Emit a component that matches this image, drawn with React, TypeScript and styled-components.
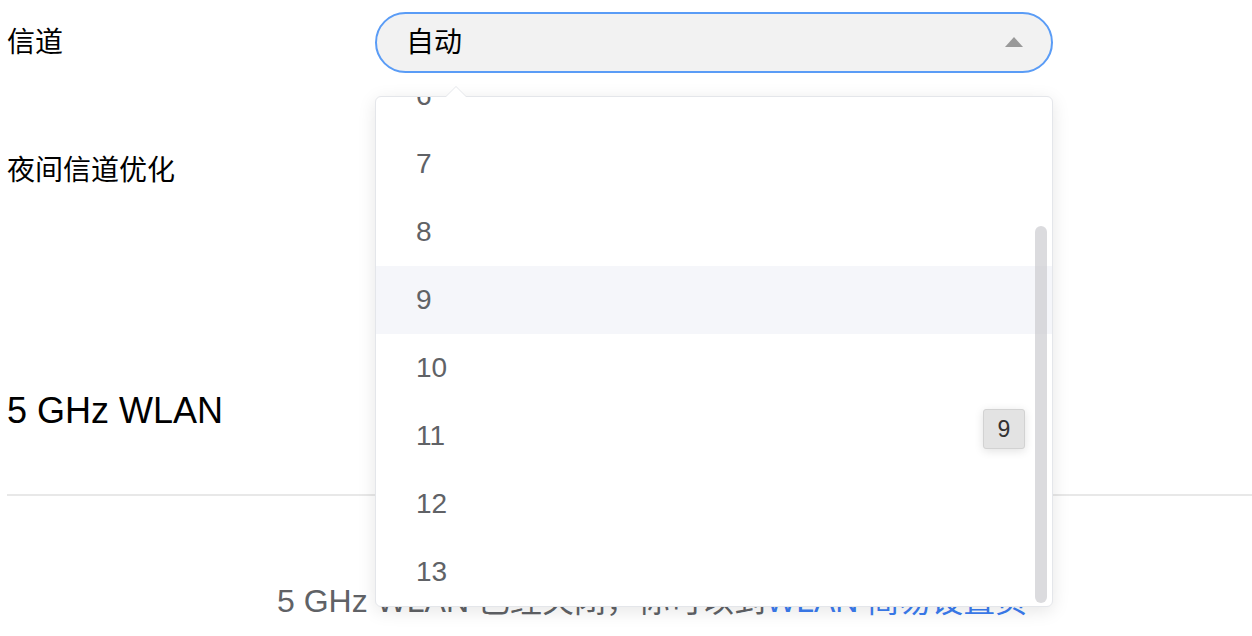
import React, { useLayoutEffect, useRef } from "react";
import styled, { createGlobalStyle } from "styled-components";

const GlobalStyle = createGlobalStyle`
  html, body {
    margin: 0;
    padding: 0;
    background: #ffffff;
    font-family: "Liberation Sans", "Noto Sans CJK SC", Arial, sans-serif;
    overflow: hidden;
  }
  * { box-sizing: border-box; }
`;

const Page = styled.div`
  width: 1252px;
  height: 636px;
  padding: 12px 0 0 7px;
  overflow: hidden;
`;

const FormRow = styled.div<{ $gap?: number }>`
  display: flex;
  align-items: center;
  height: 61px;
  margin-top: ${(p) => p.$gap ?? 0}px;
`;

const Label = styled.div`
  width: 368px;
  flex: none;
  font-size: 28px;
  line-height: 36px;
  color: #000000;
`;

const SelectWrap = styled.div`
  position: relative;
  width: 678px;
  height: 61px;
`;

const SelectBox = styled.div`
  display: flex;
  align-items: center;
  justify-content: space-between;
  height: 100%;
  padding: 0 28px 0 29px;
  border: 2px solid #5a9cf6;
  border-radius: 31px;
  background: #f2f2f2;
  font-size: 28px;
  line-height: 36px;
  color: #000000;
`;

const Caret = styled.span`
  width: 0;
  height: 0;
  border-left: 9px solid transparent;
  border-right: 9px solid transparent;
  border-bottom: 10px solid #999999;
  margin-top: -2px;
`;

const Dropdown = styled.div`
  position: absolute;
  top: calc(100% + 23px);
  left: 0;
  width: 100%;
  height: 511px;
  background: #ffffff;
  border: 1px solid #e4e6ea;
  border-radius: 6px;
  box-shadow: 0 4px 18px rgba(0, 0, 0, 0.1);
  z-index: 10;
`;

const Arrow = styled.span`
  position: absolute;
  top: -11px;
  left: 69px;
  width: 0;
  height: 0;
  border-left: 11px solid transparent;
  border-right: 11px solid transparent;
  border-bottom: 11px solid #e4e6ea;
  &::after {
    content: "";
    position: absolute;
    left: -10px;
    top: 1px;
    border-left: 10px solid transparent;
    border-right: 10px solid transparent;
    border-bottom: 10px solid #ffffff;
  }
`;

const OptionList = styled.ul`
  list-style: none;
  margin: 0;
  padding: 0;
  height: 100%;
  overflow-y: auto;
  scrollbar-width: none;
  border-radius: 6px;
  &::-webkit-scrollbar { display: none; }
`;

const Option = styled.li<{ $hover?: boolean }>`
  height: 68px;
  display: flex;
  align-items: center;
  padding-left: 40px;
  font-size: 28px;
  color: #606266;
  background: ${(p) => (p.$hover ? "#f5f6fa" : "transparent")};
`;

const ScrollThumb = styled.div`
  position: absolute;
  right: 5px;
  bottom: 3px;
  width: 12px;
  height: 377px;
  border-radius: 6px;
  background: rgba(200, 200, 205, 0.65);
`;

const Tip = styled.div`
  position: absolute;
  left: 607px;
  top: 312px;
  width: 42px;
  height: 40px;
  display: flex;
  align-items: center;
  justify-content: center;
  background: #e3e3e3;
  border: 1px solid #d2d2d2;
  border-radius: 3px;
  box-shadow: 0 2px 10px rgba(0, 0, 0, 0.12);
  font-size: 23px;
  color: #333333;
`;

const SectionTitle = styled.h2`
  margin: 190px 0 0 0;
  font-size: 36px;
  line-height: 40px;
  font-weight: 400;
  color: #000000;
`;

const Divider = styled.hr`
  margin: 63px 0 0 0;
  border: none;
  height: 2px;
  background: #e8e8e8;
`;

const Notice = styled.p`
  margin: 85px 0 0 0;
  padding-left: 270px;
  font-size: 32px;
  line-height: 40px;
  color: #606266;
  white-space: nowrap;
`;

const Link = styled.a`
  color: #3b7cf0;
  text-decoration: none;
`;

const options = ["自动", "1", "2", "3", "4", "5", "6", "7", "8", "9", "10", "11", "12", "13"];

export default function App() {
  const listRef = useRef<HTMLUListElement>(null);
  useLayoutEffect(() => {
    if (listRef.current) {
      listRef.current.scrollTop = listRef.current.scrollHeight;
    }
  }, []);

  return (
    <>
      <GlobalStyle />
      <Page>
        <FormRow>
          <Label>信道</Label>
          <SelectWrap>
            <SelectBox>
              <span>自动</span>
              <Caret />
            </SelectBox>
            <Dropdown>
              <Arrow />
              <OptionList ref={listRef}>
                {options.map((o) => (
                  <Option key={o} $hover={o === "9"}>
                    {o}
                  </Option>
                ))}
              </OptionList>
              <ScrollThumb />
              <Tip>9</Tip>
            </Dropdown>
          </SelectWrap>
        </FormRow>
        <FormRow $gap={67}>
          <Label>夜间信道优化</Label>
        </FormRow>
        <SectionTitle>5 GHz WLAN</SectionTitle>
        <Divider />
        <Notice>
          5 GHz WLAN 已经关闭，你可以到<Link>WLAN 简易设置页</Link>
        </Notice>
      </Page>
    </>
  );
}
